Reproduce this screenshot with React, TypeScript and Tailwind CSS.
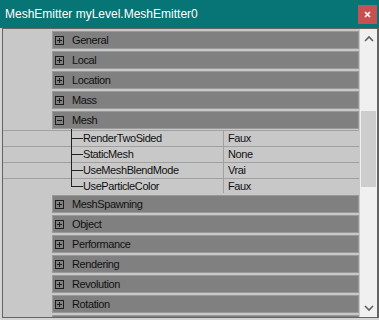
import React from "react";

const font = { fontFamily: '"Liberation Sans", Arial, sans-serif' };

function PlusBox({ minus }: { minus?: boolean }) {
  return (
    <svg width="9" height="9" viewBox="0 0 9 9" className="shrink-0">
      <rect x="0.5" y="0.5" width="8" height="8" fill="none" stroke="#1c1c1c" />
      <line x1="2" y1="4.5" x2="7" y2="4.5" stroke="#1c1c1c" />
      {!minus && <line x1="4.5" y1="2" x2="4.5" y2="7" stroke="#1c1c1c" />}
    </svg>
  );
}

function Category({ label, open }: { label: string; open?: boolean }) {
  return (
    <div className="pt-[2px] pl-[49px]">
      <div className="h-[18px] border border-[#999999] bg-[#808080] flex items-center pl-[2px]">
        {label && <PlusBox minus={open} />}
        <span className="ml-[8px] text-[11px] tracking-[-0.4px] text-[#111] leading-none">{label}</span>
      </div>
    </div>
  );
}

function Prop({ name, value, last }: { name: string; value: string; last?: boolean }) {
  return (
    <div className={`${last ? "h-[15px]" : "h-[16px]"} border-t border-[#a0a0a0] flex`}>
      <div className="w-[220px] flex items-stretch relative">
        <div className="w-[68px]" />
        <div className="relative w-[12px]">
          <div className={`absolute left-0 top-[-2px] w-px bg-[#222] ${last ? "h-[10px]" : "h-[18px]"}`} />
          <div className="absolute left-0 top-[7px] w-[12px] h-px bg-[#222]" />
        </div>
        <span className="text-[11px] tracking-[-0.4px] text-[#111] leading-[15px]">{name}</span>
      </div>
      <div className="border-l border-[#a0a0a0] pl-[4px] text-[11px] tracking-[-0.4px] text-[#111] leading-[15px]">{value}</div>
    </div>
  );
}

export default function App() {
  return (
    <div className="w-[379px] h-[320px] bg-[#d4d4d4] overflow-hidden" style={font}>
      <div className="h-[28px] bg-[#077575] flex items-center justify-between pl-[5px] pr-[2px]">
        <span className="text-white text-[12px]">MeshEmitter myLevel.MeshEmitter0</span>
        <div className="w-[19px] h-[19px] bg-[#c75050] flex items-center justify-center">
          <svg width="7" height="7" viewBox="0 0 7 7">
            <path d="M1 1 L6 6 M6 1 L1 6" stroke="#ffffff" strokeWidth="1.6" />
          </svg>
        </div>
      </div>
      <div className="h-[292px] pl-[2px] pr-[0px] pb-[2px] flex flex-col">
        <div className="flex-1 flex border-l border-t border-b border-r-2 border-[#646464] bg-[#c8c8c8] overflow-hidden">
          <div className="flex-1 flex flex-col">
            <Category label="General" />
            <Category label="Local" />
            <Category label="Location" />
            <Category label="Mass" />
            <Category label="Mesh" open />
            <div className="pt-[1px]">
              <Prop name="RenderTwoSided" value="Faux" />
              <Prop name="StaticMesh" value="None" />
              <Prop name="UseMeshBlendMode" value="Vrai" />
              <Prop name="UseParticleColor" value="Faux" last />
            </div>
            <Category label="MeshSpawning" />
            <Category label="Object" />
            <Category label="Performance" />
            <Category label="Rendering" />
            <Category label="Revolution" />
            <Category label="Rotation" />
            <Category label="" />
          </div>
          <div className="w-[18px] bg-[#f0f0f0] border-l border-[#c8c8c8] flex flex-col items-center">
            <svg width="10" height="8" viewBox="0 0 10 8" className="mt-[6px]">
              <path d="M1 6 L5 2 L9 6" fill="none" stroke="#606060" strokeWidth="1.6" />
            </svg>
            <div className="mt-[68px] w-[15px] h-[76px] bg-[#cdcdcd]" />
            <div className="flex-1" />
            <svg width="10" height="8" viewBox="0 0 10 8" className="mb-[5px]">
              <path d="M1 2 L5 6 L9 2" fill="none" stroke="#606060" strokeWidth="1.6" />
            </svg>
          </div>
        </div>
      </div>
    </div>
  );
}
